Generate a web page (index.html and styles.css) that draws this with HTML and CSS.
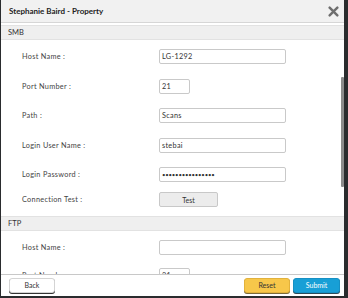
FILE: index.html
```html
<!DOCTYPE html>
<html>
<head>
<meta charset="utf-8">
<link rel="stylesheet" href="styles.css">
</head>
<body>
<div class="dialog">
  <div class="header">
    <span class="title">Stephanie Baird - Property</span>
    <svg class="close" width="10" height="10" viewBox="0 0 10 10"><path d="M1.5 1.5 L8.5 8.5 M8.5 1.5 L1.5 8.5" stroke="#6e6e6e" stroke-width="2.2" stroke-linecap="round"/></svg>
  </div>
  <div class="body">
    <div class="content">
      <div class="section">SMB</div>
      <div class="row"><span class="label">Host Name :</span><span class="input wide">LG-1292</span></div>
      <div class="row"><span class="label">Port Number :</span><span class="input short">21</span></div>
      <div class="row"><span class="label">Path :</span><span class="input wide">Scans</span></div>
      <div class="row"><span class="label">Login User Name :</span><span class="input wide">stebai</span></div>
      <div class="row"><span class="label">Login Password :</span><span class="input wide pw">••••••••••••••••</span></div>
      <div class="row test"><span class="label">Connection Test :</span><span class="btn-test">Test</span></div>
      <div class="section ftp">FTP</div>
      <div class="row"><span class="label">Host Name :</span><span class="input wide"></span></div>
      <div class="row last"><span class="label">Port Number :</span><span class="input short">21</span></div>
    </div>
    <div class="scroll-thumb"></div>
  </div>
  <div class="footer">
    <span class="btn back">Back</span>
    <span class="spacer"></span>
    <span class="btn reset">Reset</span>
    <span class="btn submit">Submit</span>
  </div>
</div>
</body>
</html>
```
FILE: styles.css
```css
html, body {
  margin: 0;
  padding: 0;
  background: #2a2c2e;
  width: 348px;
  height: 298px;
  overflow: hidden;
}
body {
  font-family: "Lato", "Open Sans", sans-serif;
  color: #333;
}
.dialog {
  margin-left: 1px;
  width: 343px;
  height: 296px;
  background: #fff;
  display: flex;
  flex-direction: column;
  overflow: hidden;
}
.header {
  height: 23px;
  flex: 0 0 auto;
  background: #f1f1f1;
  border-bottom: 1px solid #d6d6d6;
  display: flex;
  align-items: center;
  padding: 0 5px 0 8px;
  box-sizing: border-box;
}
.title {
  font-size: 8px;
  font-weight: 700;
  color: #222;
  flex: 1;
}
.close { display: block; width: 11px; height: 11px; }
.body {
  position: relative;
  flex: 1;
  overflow: hidden;
  border-bottom: 1px solid #c8c8c8;
}
.content {
  padding-top: 2px;
}
.section {
  height: 13px;
  background: #efefef;
  border-top: 1px solid #e2e2e2;
  border-bottom: 1px solid #e2e2e2;
  font-size: 7.5px;
  color: #333;
  padding-left: 7px;
  display: flex;
  align-items: center;
}
.section.ftp { margin-top: 9px; }
.row {
  display: flex;
  align-items: center;
  height: 15px;
  margin-top: 14.6px;
}
.section + .row { margin-top: 9px; }
.row.test { margin-top: 10px; }
.row.last { margin-top: 13px; }
.label {
  width: 137px;
  padding-left: 21px;
  font-size: 7.3px;
  letter-spacing: 0.3px;
  color: #444;
  white-space: nowrap;
}
.input {
  box-sizing: border-box;
  height: 15px;
  border: 1px solid #c9c9c9;
  border-radius: 2px;
  font-size: 7.3px;
  letter-spacing: 0.3px;
  color: #333;
  padding-left: 2px;
  display: flex;
  align-items: center;
  background: #fff;
}
.input.wide { width: 127px; }
.input.short { width: 31px; }
.input.pw { font-size: 6px; letter-spacing: -0.2px; }
.btn-test {
  box-sizing: border-box;
  width: 59px;
  height: 15px;
  background: #ececec;
  border: 1px solid #c8c8c8;
  border-radius: 2px;
  font-size: 7px;
  display: flex;
  align-items: center;
  justify-content: center;
  color: #333;
}
.scroll-thumb {
  position: absolute;
  right: 0;
  top: 54px;
  width: 3px;
  height: 110px;
  background: #8c8c8c;
  border-radius: 1px;
}
.footer {
  flex: 0 0 auto;
  height: 20px;
  background: #fff;
  display: flex;
  align-items: center;
  padding: 0 4px 1px 8px;
  gap: 3px;
}
.spacer { flex: 1; }
.btn {
  box-sizing: border-box;
  height: 15px;
  border-radius: 3px;
  font-size: 7px;
  display: flex;
  align-items: center;
  justify-content: center;
}
.back {
  width: 46px;
  background: #fff;
  border: 1px solid #d4d4d4;
  box-shadow: 0 1px 0 #333;
  color: #333;
}
.reset {
  width: 46px;
  background: #f7c74a;
  border: 1px solid #e2b23c;
  box-shadow: 0 1px 0 #7a6a3a;
  color: #333;
}
.submit {
  width: 47px;
  background: #189fd6;
  border: 1px solid #1690c4;
  box-shadow: 0 1px 0 #2a4b5a;
  color: #fff;
}
```
